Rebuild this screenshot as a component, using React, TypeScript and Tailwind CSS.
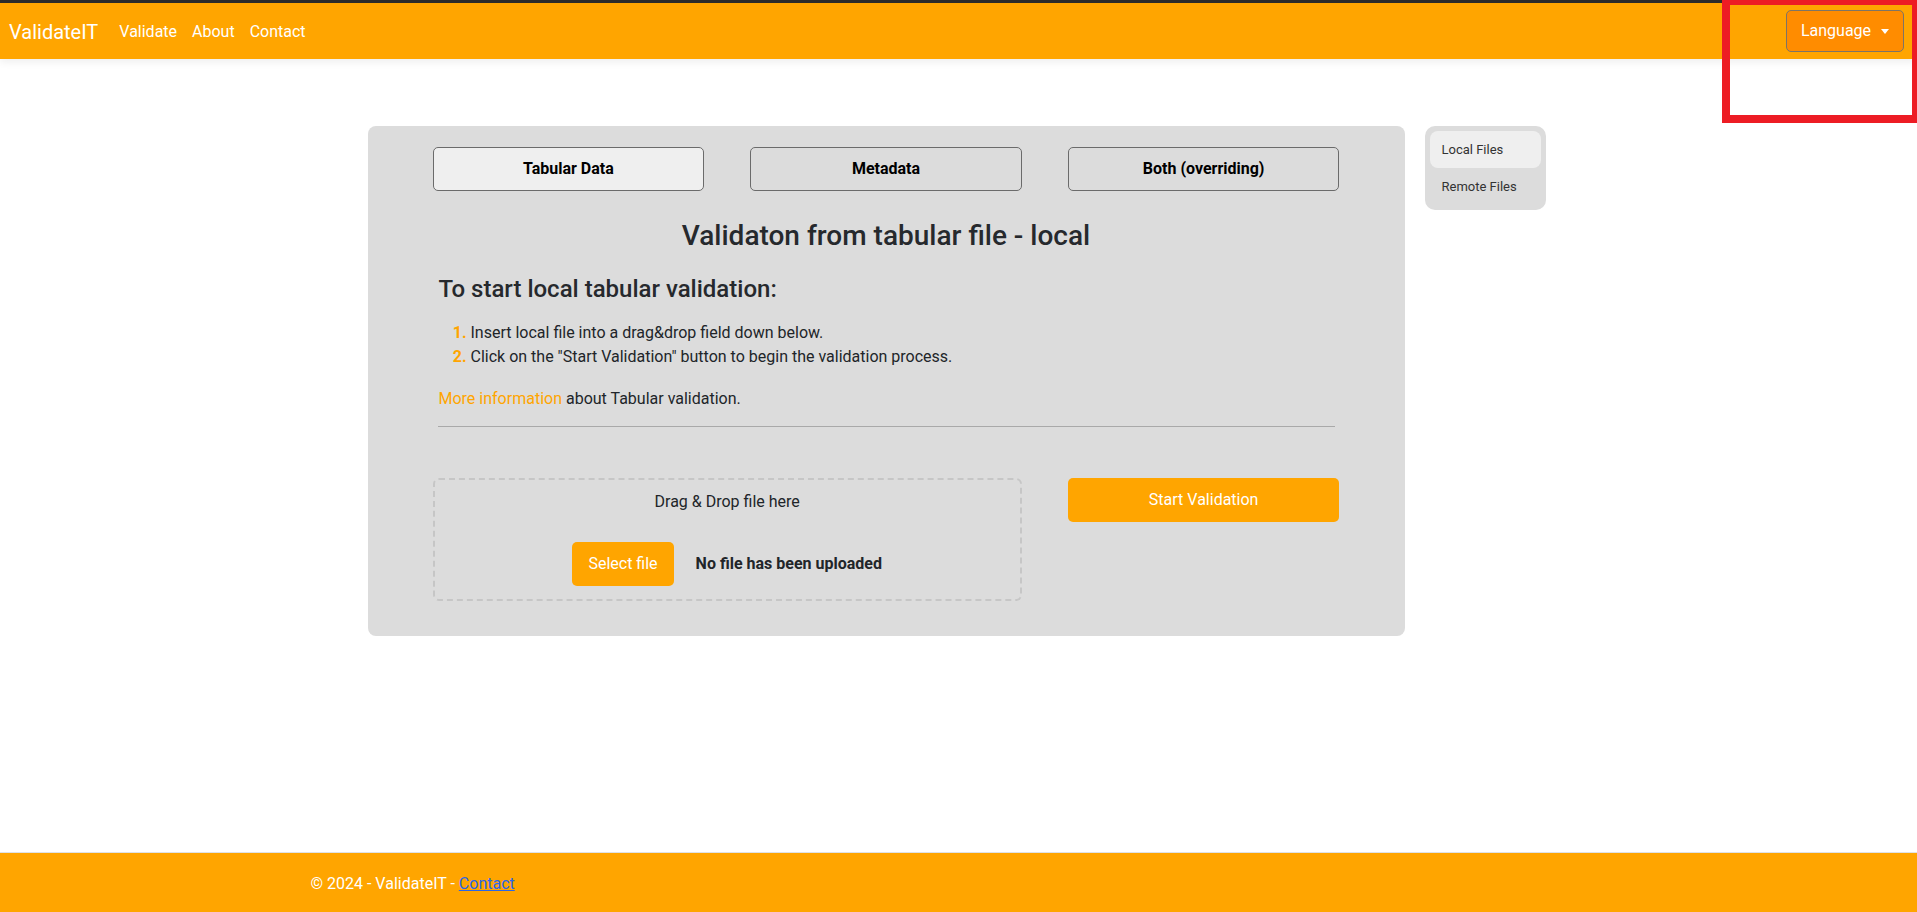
import React from "react";

export default function App() {
  return (
    <div className="relative min-h-screen flex flex-col bg-white overflow-hidden font-[Roboto,'Liberation_Sans',sans-serif] text-[#212529]">
      <header className="relative z-10 h-[59px] border-t-[3px] border-[#2b2b2b] bg-[#ffa500] flex items-center justify-between pl-[9px] pr-[13px] shadow-[0_3px_8px_rgba(0,0,0,0.07)]">
        <nav className="flex items-center pt-[2px]">
          <a className="text-[20px] text-white mr-[13px] leading-none">ValidateIT</a>
          <a className="text-[16px] text-white px-2">Validate</a>
          <a className="text-[16px] text-white px-[7px]">About</a>
          <a className="text-[16px] text-white px-2">Contact</a>
        </nav>
        <button className="h-[42px] w-[118px] bg-[#ff8c00] border border-[#7d7466] rounded-[5px] text-white text-[16px] flex items-center justify-center gap-[10px]">
          <span>Language</span>
          <span className="w-0 h-0 border-l-[4px] border-r-[4px] border-t-[5px] border-l-transparent border-r-transparent border-t-white" />
        </button>
      </header>

      <main className="flex-1 pt-[67px]">
        <div className="w-[1296px] mx-auto pl-[57px] flex items-start gap-5">
          <section className="w-[1037px] bg-[#dcdcdc] rounded-lg pt-[21px] pb-[35px] pl-[65px]">
            <div className="w-[907px]">
              <div className="grid grid-cols-3 gap-x-[46px]">
                <button className="h-[44px] border border-[#6b6b6b] rounded-[5px] bg-[#efefef] font-bold text-[16px] text-black">Tabular Data</button>
                <button className="h-[44px] border border-[#6b6b6b] rounded-[5px] bg-[#dcdcdc] font-bold text-[16px] text-black">Metadata</button>
                <button className="h-[44px] border border-[#6b6b6b] rounded-[5px] bg-[#dcdcdc] font-bold text-[16px] text-black">Both (overriding)</button>
              </div>

              <h3 className="mt-[28px] text-[28px] font-medium leading-[1.2] text-center text-[#26292d]">Validaton from tabular file - local</h3>

              <h4 className="mt-[22px] pl-[6px] text-[24px] font-medium leading-[1.2] text-[#26292d]">To start local tabular validation:</h4>

              <ol className="mt-[18px] ml-[6px] pl-8 list-decimal text-[16px] leading-6 marker:font-bold marker:text-[#ffa500]">
                <li>Insert local file into a drag&amp;drop field down below.</li>
                <li>Click on the "Start Validation" button to begin the validation process.</li>
              </ol>

              <p className="mt-[18px] pl-[6px] text-[16px] leading-6">
                <a className="text-[#ffa500]">More information</a> about Tabular validation.
              </p>

              <hr className="mt-[15px] mx-[5px] border-0 border-t border-[#a9a9a9]" />

              <div className="mt-[51px] grid grid-cols-3 gap-x-[46px] items-start">
                <div className="col-span-2 h-[123px] border-2 border-dashed border-[#c6c6c6] rounded-md flex flex-col items-center pt-[10px]">
                  <p className="text-[16px] leading-6">Drag &amp; Drop file here</p>
                  <div className="mt-[28px] flex items-center gap-[22px]">
                    <button className="h-[44px] px-4 bg-[#ffa500] rounded-[5px] text-white text-[16px]">Select file</button>
                    <span className="font-bold text-[16px]">No file has been uploaded</span>
                  </div>
                </div>
                <button className="h-[44px] bg-[#ffa500] rounded-[5px] text-white text-[16px]">Start Validation</button>
              </div>
            </div>
          </section>

          <aside className="w-[121px] bg-[#dcdcdc] rounded-[10px] p-[5px] flex flex-col">
            <a className="h-[37px] pl-[12px] rounded-[8px] bg-[#efefef] text-[13px] text-[#333] flex items-center">Local Files</a>
            <a className="h-[37px] pl-[12px] rounded-[8px] text-[13px] text-[#333] flex items-center">Remote Files</a>
          </aside>
        </div>
      </main>

      <footer className="h-[60px] border-t border-[#dee2e6] bg-[#ffa500]">
        <div className="w-[1296px] mx-auto pt-[2px] leading-[58px] text-white text-[16px]">
          © 2024 - ValidateIT - <a className="text-[#2a66e8] underline">Contact</a>
        </div>
      </footer>

      <div className="absolute left-[1722px] top-[-3px] w-[198px] h-[126px] border-[8px] border-[#ed1c24] pointer-events-none z-20" />
    </div>
  );
}
